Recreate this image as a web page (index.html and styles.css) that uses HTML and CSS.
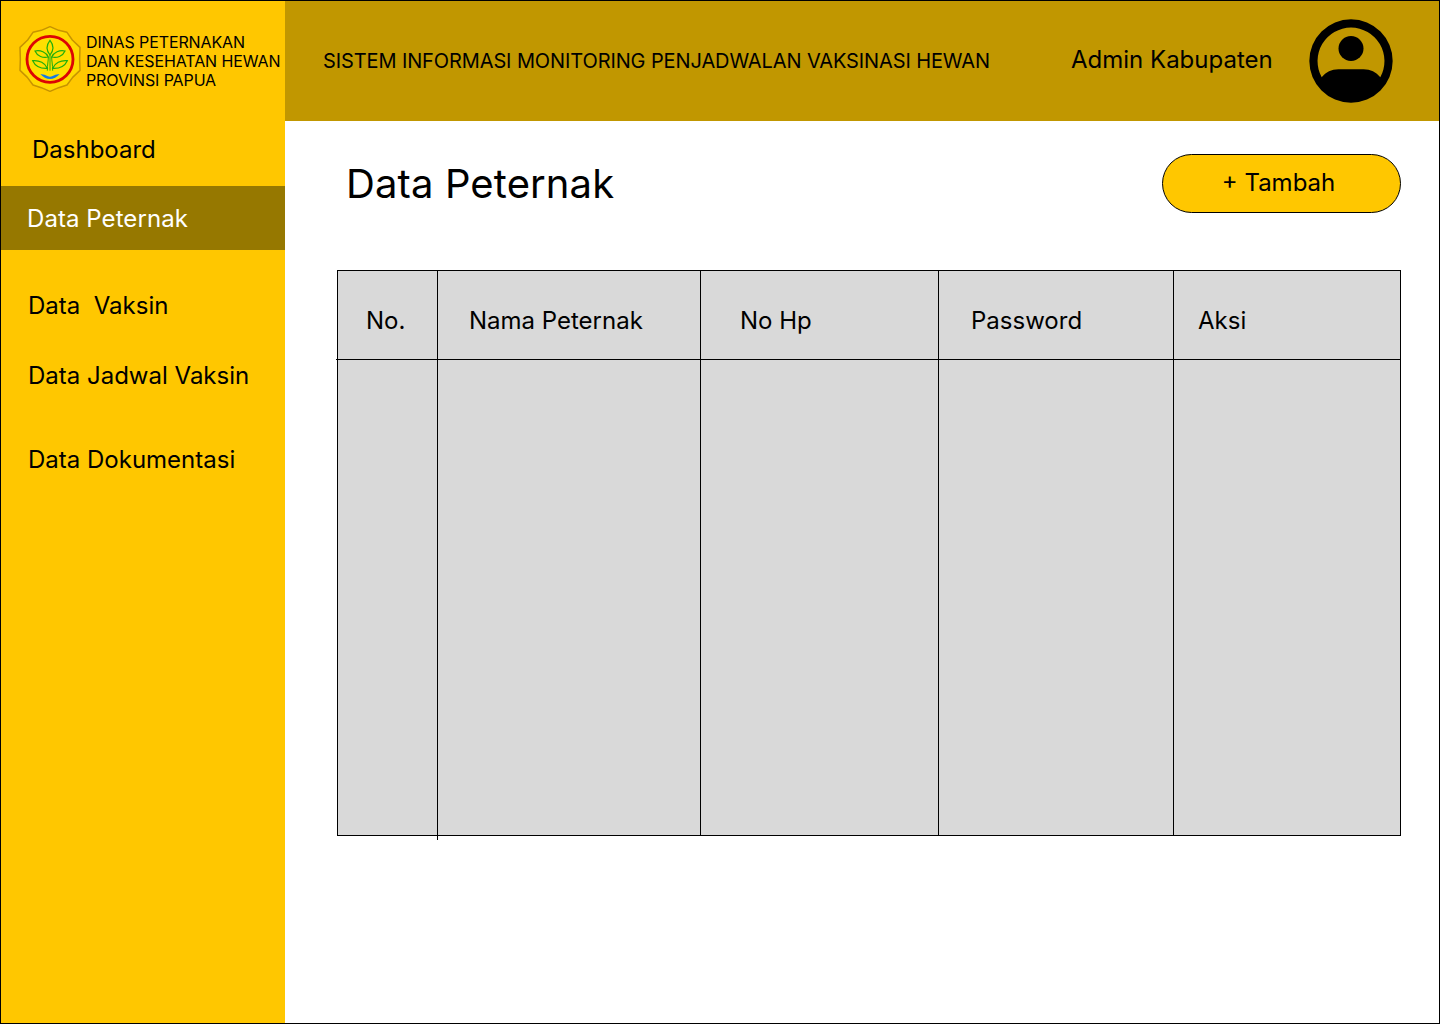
FILE: index.html
```html
<!DOCTYPE html>
<html lang="id">
<head>
<meta charset="utf-8">
<title>Data Peternak</title>
<link rel="stylesheet" href="styles.css">
</head>
<body>
<div class="app">
  <aside class="sidebar">
    <div class="brand">
      <svg class="brand-logo" viewBox="27 30 186 198" fill="none">
        <path d="M120 32 L146 43 L171 49 L187 72 L210 94 L209 130 L210 163 L188 184 L171 207 L146 215 L120 226 L94 215 L69 207 L52 184 L30 163 L31 130 L30 94 L53 72 L69 49 L94 43 Z" fill="#ffd900" stroke="#c79300" stroke-width="4.5" stroke-linejoin="round"/>
        <circle cx="120" cy="130" r="69" fill="#ffdf00" stroke="#dc0505" stroke-width="8.5"/>
        <g stroke="#1fae0c" stroke-width="3.6">
          <path d="M120 73 C108 88 108 102 120 117 C132 102 132 88 120 73 Z"/>
          <path d="M75 105 C91 101 109 109 115 123 C99 127 82 121 75 105 Z"/>
          <path d="M165 105 C149 101 131 109 125 123 C141 127 158 121 165 105 Z"/>
          <path d="M68 134 C88 132 106 141 112 157 C92 158 76 151 68 134 Z"/>
          <path d="M172 134 C152 132 134 141 128 157 C148 158 164 151 172 134 Z"/>
          <path d="M120 117 V164 M115 123 C115 135 112 145 112 164 M125 123 C125 135 128 145 128 164" stroke-width="3"/>
        </g>
        <path d="M91 174 Q106 176 112 180 Q120 184 128 180 Q134 176 149 174 Q136 189 120 189 Q104 189 91 174 Z" fill="#1678e6"/>
      </svg>
      <div class="brand-name">DINAS PETERNAKAN<br>DAN KESEHATAN HEWAN<br>PROVINSI PAPUA</div>
    </div>
    <nav class="menu">
      <a class="menu-item menu-dashboard">Dashboard</a>
      <a class="menu-item menu-active">Data Peternak</a>
      <a class="menu-item menu-vaksin">Data&nbsp; Vaksin</a>
      <a class="menu-item menu-jadwal">Data Jadwal Vaksin</a>
      <a class="menu-item menu-dokumentasi">Data Dokumentasi</a>
    </nav>
  </aside>
  <div class="content">
    <header class="topbar">
      <div class="system-name">SISTEM INFORMASI MONITORING PENJADWALAN VAKSINASI HEWAN</div>
      <div class="user-name">Admin Kabupaten</div>
      <svg class="avatar" viewBox="0 0 24 24">
        <path fill-rule="evenodd" d="M12 2a10 10 0 1 0 0 20a10 10 0 1 0 0-20Z M4.97 15.9A8.03 8.03 0 1 1 19.03 15.9C18 14.7 16.7 14 15 14H9C7.3 14 6 14.7 4.97 15.9Z"/>
        <circle cx="12" cy="9" r="3"/>
      </svg>
    </header>
    <main class="main">
      <div class="heading">
        <h1 class="title">Data Peternak</h1>
        <button class="add-button">+ Tambah</button>
      </div>
      <div class="table">
        <div class="row row-head">
          <div class="cell cell-no">No.</div>
          <div class="cell cell-name">Nama Peternak</div>
          <div class="cell cell-phone">No Hp</div>
          <div class="cell cell-password">Password</div>
          <div class="cell cell-action">Aksi</div>
        </div>
        <div class="row row-body">
          <div class="cell cell-no"></div>
          <div class="cell"></div>
          <div class="cell"></div>
          <div class="cell"></div>
          <div class="cell"></div>
        </div>
      </div>
    </main>
  </div>
</div>
</body>
</html>
```
FILE: styles.css
```css
* {
  box-sizing: border-box;
}

body {
  margin: 0;
  font-family: Inter, sans-serif;
  font-size: 24px;
  line-height: 29px;
  color: #000;
}

.app {
  display: flex;
  width: 1440px;
  height: 1024px;
  border: 1px solid #000;
  background: #fff;
}

.sidebar {
  width: 284px;
  background: #ffc700;
}

.brand {
  display: flex;
  gap: 5px;
  height: 120px;
  padding: 25px 0 0 18px;
}

.brand-logo {
  flex: none;
  width: 62px;
  height: 66px;
}

.brand-name {
  padding-top: 7px;
  font-size: 16px;
  line-height: 19px;
  letter-spacing: -0.11px;
  white-space: nowrap;
}

.menu {
  display: flex;
  flex-direction: column;
}

.menu-item {
  padding-left: 27px;
}

.menu-dashboard {
  height: 65px;
  padding: 14px 0 0 31px;
}

.menu-active {
  height: 64px;
  padding: 18px 0 0 26px;
  background: #967800;
  color: #fff;
  letter-spacing: 0.07px;
}

.menu-vaksin {
  margin-top: 41px;
}

.menu-jadwal {
  margin-top: 41px;
}

.menu-dokumentasi {
  margin-top: 55px;
}

.content {
  flex: 1;
}

.topbar {
  display: flex;
  align-items: center;
  height: 120px;
  padding: 0 38px;
  background: #c19700;
}

.system-name {
  width: 748px;
  font-size: 20px;
  line-height: 24px;
  letter-spacing: -0.11px;
  white-space: nowrap;
}

.user-name {
  width: 230px;
  padding-bottom: 3px;
}

.avatar {
  flex: none;
  width: 100px;
  height: 100px;
}

.main {
  padding: 33px 38px 0 52px;
}

.heading {
  display: flex;
  justify-content: space-between;
  padding-left: 9px;
}

.title {
  margin: 6px 0 0;
  font-size: 40px;
  font-weight: 400;
  line-height: 48px;
  letter-spacing: 0.12px;
}

.add-button {
  width: 239px;
  height: 59px;
  padding: 0 6px 2px 0;
  border: 1px solid #000;
  border-radius: 30px;
  background: #ffc700;
  color: #000;
  font: inherit;
}

.table {
  width: 1064px;
  margin-top: 57px;
  border: 1px solid #000;
  background: #d9d9d9;
}

.row {
  display: grid;
  grid-template-columns: 100px 263px 238px 235px 226px;
}

.row-head {
  position: relative;
  height: 89px;
  border-bottom: 1px solid #000;
}

.row-head::after {
  content: "";
  position: absolute;
  left: -2px;
  bottom: -1px;
  width: 2px;
  height: 1px;
  background: #000;
}

.row-body {
  height: 475px;
}

.cell {
  position: relative;
  padding-top: 35px;
  border-right: 1px solid #000;
}

.cell:last-child {
  border-right: 0;
}

.row-body .cell-no::after {
  content: "";
  position: absolute;
  right: -1px;
  bottom: -5px;
  width: 1px;
  height: 5px;
  background: #000;
}

.cell-no {
  padding-left: 28px;
}

.cell-name {
  padding-left: 31px;
}

.cell-phone {
  padding-left: 39px;
}

.cell-password {
  padding-left: 32px;
}

.cell-action {
  padding-left: 24px;
}
```
